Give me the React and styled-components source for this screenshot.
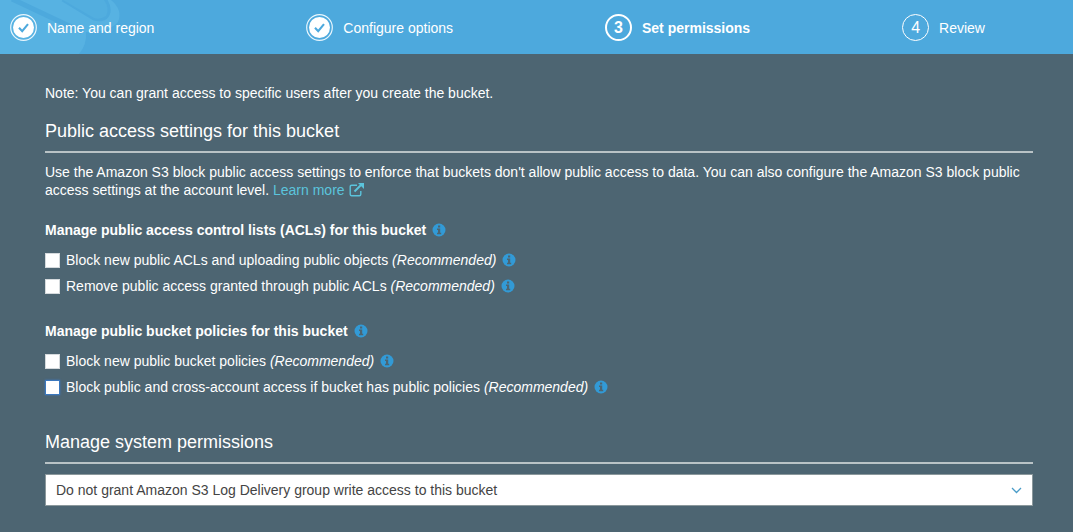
import React from 'react';
import styled, { createGlobalStyle, css } from 'styled-components';

const GlobalStyle = createGlobalStyle`
  * { box-sizing: border-box; }
  html { background: #4d6572; }
  body {
    margin: 0;
    background: #4d6572;
    color: #fff;
    font: 14px/18px "Liberation Sans", Arial, sans-serif;
  }
`;

const Header = styled.header`
  position: relative;
  background: #4da9dd;
`;

const Artwork = styled.svg`
  position: absolute;
  top: 0;
  left: 0;
  width: 130px;
  height: 100%;
`;

const Steps = styled.ol`
  position: relative;
  display: flex;
  align-items: center;
  justify-content: space-between;
  height: 54px;
  margin: 0;
  padding: 0 88px 0 10px;
  list-style: none;
`;

const Step = styled.li`
  display: flex;
  align-items: center;
  gap: 10px;
  font-weight: ${(p) => (p.$current ? 'bold' : 'normal')};
`;

const StepLabel = styled.span`
  padding-top: 2px;
`;

const Badge = styled.span`
  display: grid;
  place-items: center;
  width: 27px;
  height: 27px;
  padding-top: 1px;
  border: ${(p) => (p.$current ? 2 : 1)}px solid #fff;
  border-radius: 50%;
  font-size: 16px;
`;

const Main = styled.main`
  padding: 30px 40px 26px 45px;
`;

const Note = styled.p`
  margin: 0;
`;

const Title = styled.h2`
  margin: ${(p) => p.$top}px 0 10px;
  padding-bottom: 8px;
  border-bottom: 2px solid #b9c3c6;
  font-size: 18px;
  line-height: 24px;
  font-weight: normal;
`;

const Link = styled.a`
  color: #5bc4dc;
  text-decoration: none;
`;

const ExternalSvg = styled.svg`
  width: 15px;
  height: 14px;
  margin-left: 4px;
  vertical-align: -2px;
`;

const Group = styled.fieldset`
  margin: 22px 0 0;
  padding: 0;
  border: 0;
  & + & { margin-top: 27px; }
`;

const Legend = styled.legend`
  display: flex;
  align-items: center;
  gap: 6px;
  padding: 0;
  margin-bottom: 12px;
  font-weight: bold;
`;

const Options = styled.div`
  display: grid;
  gap: 8px;
`;

const Option = styled.div`
  display: flex;
  align-items: center;
  gap: 6px;
`;

const Checkbox = styled.input`
  appearance: none;
  width: 15px;
  height: 15px;
  margin: 0;
  border: 1px solid #d5dadd;
  background: #fff;
  ${(p) => p.$active && css`
    border-color: #3c78be;
    box-shadow: 0 0 2px #3c78be;
  `}
  &:checked { background: #329ad6; }
`;

const InfoButton = styled.button`
  display: flex;
  padding: 0;
  border: 0;
  background: none;
`;

const SelectBox = styled.div`
  position: relative;
`;

const Select = styled.select`
  appearance: none;
  display: block;
  width: 100%;
  height: 32px;
  padding: 0 36px 0 10px;
  border: 1px solid #8b989c;
  border-radius: 0;
  background: #fff;
  color: #444;
  font: inherit;
`;

const Chevron = styled.svg`
  position: absolute;
  top: 13px;
  right: 11px;
  width: 11px;
  height: 7px;
  pointer-events: none;
`;

function Info() {
  return (
    <InfoButton type="button" aria-label="More information">
      <svg width="14" height="14" viewBox="0 0 14 14" aria-hidden="true">
        <circle cx="7" cy="7" r="6.5" fill="#329ad6" />
        <path d="M6 2.5h2.2v2H6zM5 5.6h3.2v4.2h1v1.5H5V9.8h1V7H5z" fill="#4d6572" />
      </svg>
    </InfoButton>
  );
}

function Done() {
  return (
    <svg width="27" height="27" viewBox="0 0 27 27" aria-label="Completed">
      <circle cx="13.5" cy="13.5" r="12.8" fill="none" stroke="#e8f6fd" strokeWidth="1.2" />
      <circle cx="13.5" cy="13.5" r="10.5" fill="#fff" />
      <path d="M9 13.7l3.2 3.4 5.8-7" fill="none" stroke="#4da9dd" strokeWidth="2.1" />
    </svg>
  );
}

const steps = ['Name and region', 'Configure options', 'Set permissions', 'Review'];

const groups = [
  {
    title: 'Manage public access control lists (ACLs) for this bucket',
    options: [
      ['new-acls', 'Block new public ACLs and uploading public objects'],
      ['remove-acls', 'Remove public access granted through public ACLs'],
    ],
  },
  {
    title: 'Manage public bucket policies for this bucket',
    options: [
      ['new-policies', 'Block new public bucket policies'],
      ['cross-account', 'Block public and cross-account access if bucket has public policies'],
    ],
  },
];

export default function App() {
  return (
    <>
      <GlobalStyle />
      <Header>
        <Artwork viewBox="0 0 130 54" preserveAspectRatio="xMinYMin slice" aria-hidden="true">
          <path d="M0 0H111Q123 10 118 22Q110 32 86 32Q87 45 79 54H0z" fill="#57b2e2" />
          <path d="M12 -1L82 32M63 -1L94 18Q106 21 108 12Q109 5 103 -2" fill="none" stroke="#4da9dd" strokeWidth="5" />
          <path d="M63 0H104Q110 8 106 16Q100 20 94 18z" fill="#52aedf" />
        </Artwork>
        <Steps>
          {steps.map((label, i) => (
            <Step key={label} $current={i === 2} aria-current={i === 2 ? 'step' : undefined}>
              {i < 2 ? <Done /> : <Badge $current={i === 2}>{i + 1}</Badge>}
              <StepLabel>{label}</StepLabel>
            </Step>
          ))}
        </Steps>
      </Header>
      <Main>
        <Note>Note: You can grant access to specific users after you create the bucket.</Note>
        <Title $top={17}>Public access settings for this bucket</Title>
        <Note>
          Use the Amazon S3 block public access settings to enforce that buckets don't allow public
          access to data. You can also configure the Amazon S3 block public access settings at the
          account level.{' '}
          <Link href="#learn-more">
            Learn more
            <ExternalSvg viewBox="0 0 15 14" fill="none" stroke="currentColor" aria-hidden="true">
              <path d="M8 2.2H2.7Q1.2 2.2 1.2 3.7V11.3Q1.2 12.8 2.7 12.8H10.3Q11.8 12.8 11.8 11.3V8" strokeWidth="1.4" />
              <path d="M5.5 8.5L12 2" strokeWidth="2" />
              <path d="M9 0h6v6z" fill="currentColor" stroke="none" />
            </ExternalSvg>
          </Link>
        </Note>
        {groups.map((group) => (
          <Group key={group.title}>
            <Legend>{group.title}<Info /></Legend>
            <Options>
              {group.options.map(([id, label]) => (
                <Option key={id}>
                  <Checkbox type="checkbox" id={id} $active={id === 'cross-account'} />
                  <label htmlFor={id}>{label} <em>(Recommended)</em></label>
                  <Info />
                </Option>
              ))}
            </Options>
          </Group>
        ))}
        <Title $top={34}>Manage system permissions</Title>
        <SelectBox>
          <Select aria-label="Manage system permissions">
            <option>Do not grant Amazon S3 Log Delivery group write access to this bucket</option>
          </Select>
          <Chevron viewBox="0 0 11 7" aria-hidden="true">
            <path d="M1 1l4.5 4.5L10 1" fill="none" stroke="#4a9cc8" strokeWidth="1.3" />
          </Chevron>
        </SelectBox>
      </Main>
    </>
  );
}
